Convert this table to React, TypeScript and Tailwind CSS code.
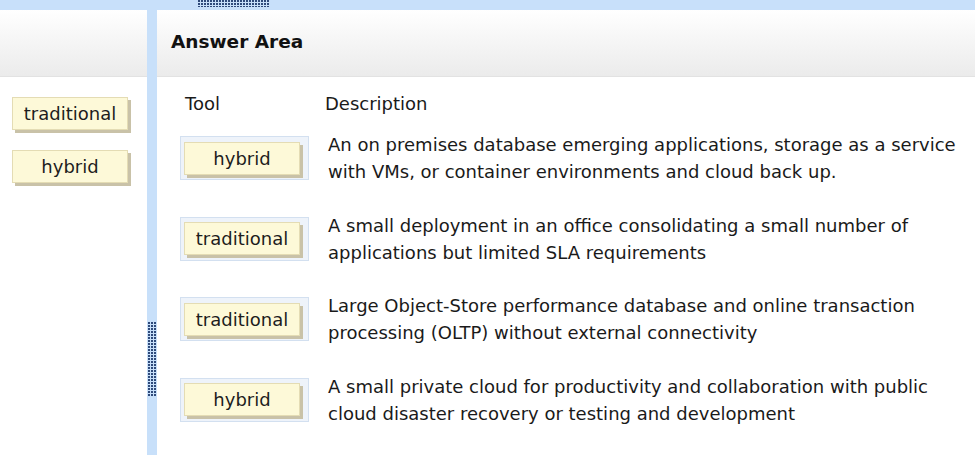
import React from 'react';

const font = { fontFamily: '"DejaVu Sans", Verdana, sans-serif' };

const rows = [
  {
    tool: 'hybrid',
    text: 'An on premises database emerging applications, storage as a service with VMs, or container environments and cloud back up.',
  },
  {
    tool: 'traditional',
    text: 'A small deployment in an office consolidating a small number of applications but limited SLA requirements',
  },
  {
    tool: 'traditional',
    text: 'Large Object-Store performance database and online transaction processing (OLTP) without external connectivity',
  },
  {
    tool: 'hybrid',
    text: 'A small private cloud for productivity and collaboration with public cloud disaster recovery or testing and development',
  },
];

const Grip = ({ w, h }: { w: number; h: number }) => (
  <svg width={w} height={h} className="block">
    <defs>
      <pattern id={`dots-${w}-${h}`} width="3" height="3" patternUnits="userSpaceOnUse">
        <rect x="0" y="0" width="2" height="2" fill="#2f4a7a" />
      </pattern>
    </defs>
    <rect width={w} height={h} fill={`url(#dots-${w}-${h})`} />
  </svg>
);

const Chip = ({ label }: { label: string }) => (
  <div className="w-[116px] h-[33px] flex items-center justify-center bg-[#fdf9d8] border border-[#e4dcb4] shadow-[3px_3px_0_#c9c2a8] text-[18px] text-[#1d1d1d]">
    {label}
  </div>
);

export default function App() {
  return (
    <div className="w-[975px] h-[455px] bg-[#c8e0fa] flex flex-col overflow-hidden" style={font}>
      <div className="h-[10px] shrink-0 pl-[198px]">
        <Grip w={72} h={7} />
      </div>
      <div className="flex flex-1 min-h-0">
        <div className="w-[147px] bg-white flex flex-col">
          <div className="h-[67px] bg-gradient-to-b from-white to-[#ebebeb] border-b border-[#e2e2e2]" />
          <div className="flex flex-col gap-[20px] pt-[20px] pl-[12px]">
            <Chip label="traditional" />
            <Chip label="hybrid" />
          </div>
        </div>
        <div className="w-[10px] flex flex-col items-center pt-[312px]">
          <Grip w={8} h={74} />
        </div>
        <div className="flex-1 bg-white flex flex-col">
          <div className="h-[67px] bg-gradient-to-b from-white to-[#ebebeb] border-b border-[#e2e2e2] flex items-center pl-[14px] pb-[2px]">
            <span className="text-[18.5px] font-bold text-[#111]">Answer Area</span>
          </div>
          <div className="flex pt-[13px] text-[18px] leading-[27px] text-[#1a1a1a]">
            <div className="w-[168px] pl-[28px]">Tool</div>
            <div>Description</div>
          </div>
          <div className="flex flex-col gap-[26.5px] pt-[14px]">
            {rows.map((r, i) => (
              <div key={i} className="flex items-start">
                <div className="ml-[23px] mt-[5px] w-[129px] h-[44px] bg-[#eef3fa] border border-[#d3e0f0] flex items-center pl-[3px]">
                  <Chip label={r.tool} />
                </div>
                <p className="ml-[19px] w-[640px] text-[18px] leading-[27px] text-[#1a1a1a]">{r.text}</p>
              </div>
            ))}
          </div>
        </div>
      </div>
    </div>
  );
}
